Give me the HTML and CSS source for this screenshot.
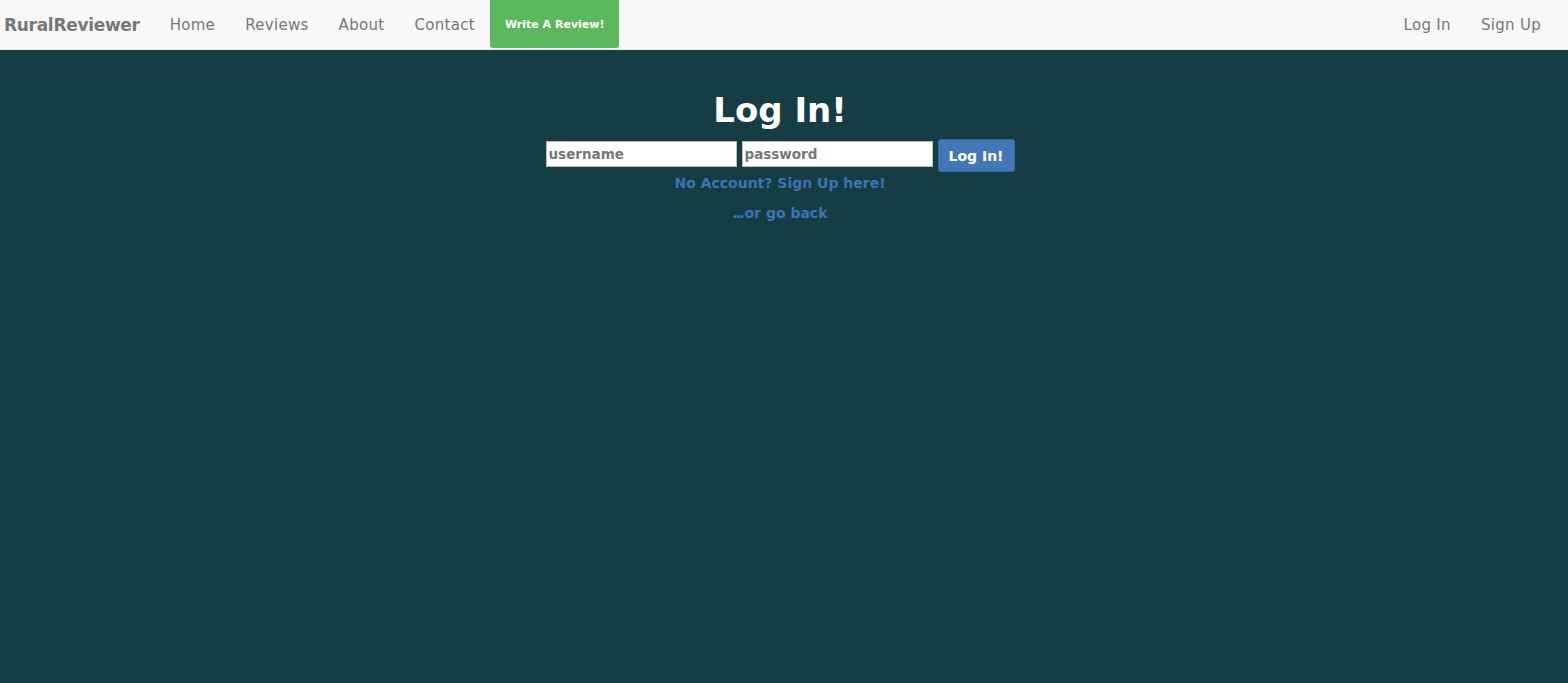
FILE: index.html
```html
<!DOCTYPE html>
<html>
<head>
<meta charset="utf-8">
<title>RuralReviewer - Log In</title>
<link rel="stylesheet" href="styles.css">
</head>
<body>
<nav class="navbar">
  <div class="nav-left">
    <a class="brand" href="#">RuralReviewer</a>
    <a class="nav-link" href="#">Home</a>
    <a class="nav-link" href="#">Reviews</a>
    <a class="nav-link" href="#">About</a>
    <a class="nav-link" href="#">Contact</a>
    <a class="nav-cta" href="#">Write A Review!</a>
  </div>
  <div class="nav-right">
    <a class="nav-link" href="#">Log In</a>
    <a class="nav-link" href="#">Sign Up</a>
  </div>
</nav>
<main class="login">
  <h1 class="title">Log In!</h1>
  <form class="login-form">
    <input class="field" type="text" placeholder="username">
    <input class="field" type="password" placeholder="password">
    <button class="btn" type="button">Log In!</button>
  </form>
  <a class="link signup" href="#">No Account? Sign Up here!</a>
  <a class="link back" href="#"><span class="dots">...</span>or go back</a>
</main>
</body>
</html>
```
FILE: styles.css
```css
html, body {
  margin: 0;
  padding: 0;
  height: 100%;
}
body {
  background: #173d44;
  font-family: "DejaVu Sans", "Liberation Sans", sans-serif;
}
a { text-decoration: none; }

.navbar {
  display: flex;
  justify-content: space-between;
  align-items: stretch;
  height: 49px;
  background: #f8f8f8;
  border-bottom: 1px solid #e7e7e7;
}
.nav-left, .nav-right {
  display: flex;
  align-items: stretch;
}
.nav-right { padding-right: 12px; }
.brand {
  display: flex;
  align-items: center;
  padding: 0 15px 0 4px;
  font-size: 17px;
  font-weight: bold;
  color: #777;
  letter-spacing: -0.3px;
}
.nav-link {
  display: flex;
  align-items: center;
  padding: 0 15px;
  font-size: 15px;
  letter-spacing: 0.3px;
  color: #777;
}
.nav-cta {
  display: flex;
  align-items: center;
  padding: 0 15px;
  background: #5cb85c;
  color: #fff;
  font-size: 11px;
  font-weight: bold;
  border-radius: 0 0 3px 3px;
  height: 48px;
}

.login {
  display: flex;
  flex-direction: column;
  align-items: center;
  padding: 36px 8px 0 0;
}
.title {
  margin: 0;
  font-size: 34px;
  line-height: 48px;
  font-weight: bold;
  color: #fff;
}
.login-form {
  display: flex;
  align-items: flex-start;
  gap: 5px;
  margin-top: 5px;
}
.field {
  box-sizing: border-box;
  width: 191px;
  height: 26px;
  margin-top: 2px;
  padding: 1px 2px;
  border: 1px solid #bbb;
  background: #fff;
  font-family: inherit;
  font-size: 13.5px;
  font-weight: bold;
  color: #333;
  outline: none;
}
.field::placeholder { color: #777; }
.btn {
  box-sizing: border-box;
  width: 77px;
  height: 33px;
  border: 1px solid #2e6da4;
  border-radius: 3px;
  background: #4377b7;
  color: #fff;
  font-family: inherit;
  font-size: 14px;
  font-weight: bold;
  cursor: pointer;
}
.link {
  color: #3d72b5;
  font-size: 14px;
  font-weight: bold;
}
.signup { margin-top: 1px; line-height: 20px; }
.back { margin-top: 10px; line-height: 20px; }
.dots { letter-spacing: -2px; margin-right: 2px; }
```
